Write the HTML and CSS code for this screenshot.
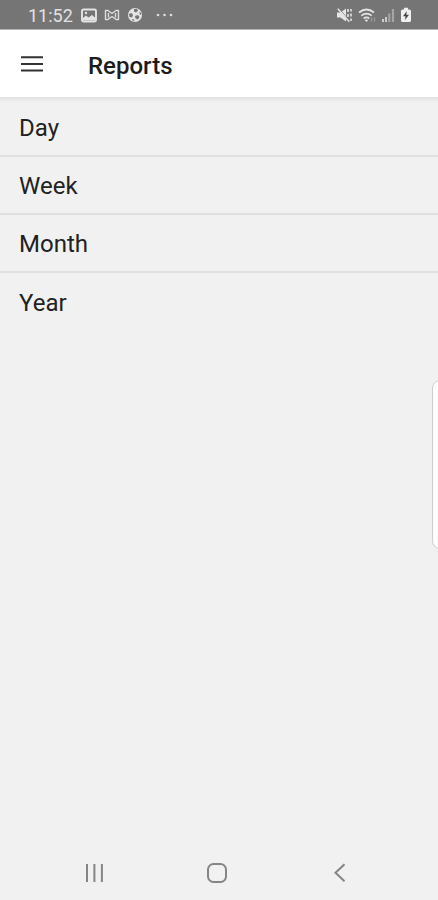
FILE: index.html
```html
<!DOCTYPE html>
<html lang="en">
<head>
  <meta charset="UTF-8">
  <meta name="viewport" content="width=device-width, initial-scale=1.0">
  <title>Reports</title>
  <link rel="stylesheet" href="styles.css">
</head>
<body>
  <div class="screen">
    <div class="statusbar">
      <span class="clock">11:52</span>
      <div class="notifications">
        <svg width="16" height="15" viewBox="0 0 16 15">
          <rect x="1" y="1.500" width="14" height="12" rx="1.500" fill="none" stroke="#e4e4e4" stroke-width="1.900"/>
          <path d="M2 12.500V10l3-2.500 2.500 2L11 7l3.500 3v2.500z" fill="#e4e4e4"/>
          <circle cx="5" cy="5" r="1.200" fill="#e4e4e4"/>
        </svg>
        <svg width="16" height="12" viewBox="0 0 16 12">
          <path d="M1.500 1.500v9h2.500L8 7.500l4 3h2.500v-9H12L8 4.500 4 1.500zM4.500 4v4.500M11.500 4v4.500" fill="none" stroke="#dcdcdc" stroke-width="1.400" stroke-linejoin="round"/>
        </svg>
        <svg width="16" height="16" viewBox="0 0 16 16">
          <circle cx="8" cy="8" r="7" fill="#e4e4e4"/>
          <path d="M7 2l3-.3 1 2-2 1.800-2-1zM2 7l2.500-1 1.500 2-1 2.500-2.500-.5zM8 9l3-1 1.500 2-1.500 2.500-2.500-1zM12.500 5l1.700 1-.2 2-1.500-1zM5 12l2 .5.500 1.700-2-.7z" fill="#757575"/>
        </svg>
        <svg class="more" width="18" height="4" viewBox="0 0 18 4">
          <circle cx="2" cy="2" r="1.300" fill="#dedede"/>
          <circle cx="8.500" cy="2" r="1.300" fill="#dedede"/>
          <circle cx="15" cy="2" r="1.300" fill="#dedede"/>
        </svg>
      </div>
      <div class="indicators">
        <svg width="17" height="16" viewBox="0 0 17 16">
          <path d="M1 5.500h3.500L10 1.500v13l-5.500-4H1z" fill="#e4e4e4"/>
          <path d="M2.500 1.200l11 12.500" stroke="#757575" stroke-width="1"/>
          <path d="M1.800 1.800l11.500 13" stroke="#e4e4e4" stroke-width="1.400"/>
          <path d="M12 2v3M12 7v3M15 2v2.500M15 6.500v3M15 11.500v2.500" stroke="#e4e4e4" stroke-width="1.600"/>
        </svg>
        <svg width="19" height="15" viewBox="0 0 19 15">
          <path d="M1 4.500q7.500-6 15 0M3.300 7.700q5.200-4.300 10.400 0M5.700 10.500q2.800-2.300 5.600 0" fill="none" stroke="#e4e4e4" stroke-width="1.700"/>
          <path d="M6.700 12q1.800-1.200 3.600 0l-1.800 2z" fill="#e4e4e4"/>
          <path d="M13.500 9.500v4M16.500 9.500v4" stroke="#9c9c9c" stroke-width="1.300"/>
        </svg>
        <svg width="13" height="15" viewBox="0 0 13 15">
          <path d="M1 11v3M4 9v5" stroke="#d5d5d5" stroke-width="1.800"/>
          <path d="M7.300 5.500V14M11 1v13" stroke="#a4a4a4" stroke-width="2.200"/>
        </svg>
        <svg width="12" height="16" viewBox="0 0 12 16">
          <path d="M4 .8h4V2.500h1.500q1.500 0 1.500 1.500v9.500q0 1.500-1.500 1.500h-7Q1 15 1 13.500V4q0-1.500 1.500-1.500H4z" fill="#f0f0f0"/>
          <path d="M6.800 4L3 9.300h2.500L5 13l4-5.300H6.300z" fill="#444"/>
        </svg>
      </div>
    </div>

    <header class="toolbar">
      <svg class="menu" width="22" height="16" viewBox="0 0 22 16">
        <path d="M0 1.300h22M0 8h22M0 14.500h22" stroke="#333" stroke-width="2"/>
      </svg>
      <h1>Reports</h1>
    </header>

    <ul class="list">
      <li>Day</li>
      <li>Week</li>
      <li>Month</li>
      <li>Year</li>
    </ul>

    <div class="edge-panel"></div>

    <nav class="navbar">
      <svg width="20" height="20" viewBox="0 0 20 20">
        <path d="M3 1v18M10.400 1v18M17.900 1v18" stroke="#858585" stroke-width="2"/>
      </svg>
      <svg width="20" height="20" viewBox="0 0 20 20">
        <rect x="1" y="1" width="18" height="18" rx="5.500" fill="none" stroke="#858585" stroke-width="2"/>
      </svg>
      <svg width="20" height="20" viewBox="0 0 20 20">
        <path d="M14.500 1.200L5.500 9.700l9 8.500" fill="none" stroke="#858585" stroke-width="2"/>
      </svg>
    </nav>
  </div>
</body>
</html>
```

FILE: styles.css
```css
body {
  margin: 0;
  font-family: Roboto, Arial, sans-serif;
  background-color: #f1f1f1;
}
.screen {
  position: relative;
  display: flex;
  flex-direction: column;
  height: 900px;
  overflow: hidden;
}
.statusbar {
  display: flex;
  align-items: center;
  box-sizing: border-box;
  height: 30px;
  padding: 1px 26px 0 28px;
  background-color: #757575;
  border-bottom: 1px solid #b5b5b5;
}
.clock {
  width: 53px;
  padding-top: 2px;
  font-size: 18px;
  line-height: 20px;
  color: #e2e2e2;
}
.notifications {
  display: flex;
  align-items: center;
  gap: 7px;
}
.more {
  margin-left: 6px;
}
.indicators {
  display: flex;
  align-items: center;
  gap: 5px;
  margin-left: auto;
}
.toolbar {
  display: flex;
  align-items: center;
  box-sizing: border-box;
  height: 67px;
  padding: 3px 21px 0;
  background-color: #fff;
}
.menu {
  margin-top: -2px;
}
.toolbar h1 {
  margin: 0 0 0 45px;
  padding-top: 1px;
  font-size: 24px;
  font-weight: 500;
  line-height: 28px;
  color: #1c1c1c;
}
.list {
  flex: 1;
  margin: 0;
  padding: 2px 0 0;
  list-style: none;
  background: linear-gradient(#e1e1e1, #f1f1f1) no-repeat 0 0 / 100% 5px;
}
.list li {
  box-sizing: border-box;
  height: 58px;
  padding-left: 19px;
  font-size: 24px;
  line-height: 58px;
  color: #222;
  border-bottom: 2px solid #e0e0e0;
}
.list li:last-child {
  line-height: 60px;
  border-bottom: none;
}
.edge-panel {
  position: absolute;
  top: 380px;
  right: -12px;
  box-sizing: border-box;
  width: 18px;
  height: 169px;
  background-color: #fdfdfd;
  border: 1px solid #cfcfcf;
  border-radius: 8px;
}
.navbar {
  display: flex;
  align-items: center;
  justify-content: space-between;
  height: 55px;
  padding: 0 88px 0 84px;
}
```
